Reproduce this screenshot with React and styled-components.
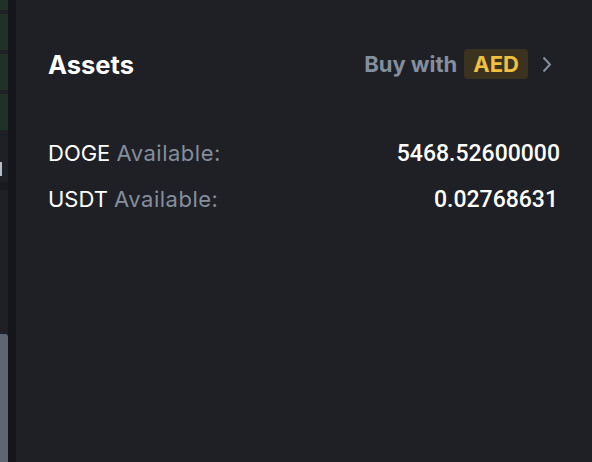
import React from "react";
import styled, { createGlobalStyle } from "styled-components";

const Global = createGlobalStyle`
  html, body { margin: 0; padding: 0; background: #15161b; }
  body { font-family: Inter, "Noto Sans", sans-serif; -webkit-font-smoothing: antialiased; }
`;

const Page = styled.div`
  display: flex;
  width: 592px;
  height: 462px;
  overflow: hidden;
  background: #15161b;
`;

const SideStrip = styled.div`
  width: 8px;
  display: flex;
  flex-direction: column;
  background: #1e2026;
`;

const GreenCell = styled.div`
  height: ${(p) => p.$h}px;
  margin-top: ${(p) => p.$mt}px;
  background: #1f3129;
`;

const Marker = styled.div`
  margin-top: 32px;
  width: 2px;
  height: 14px;
  background: #b7bdc6;
`;

const Divider = styled.div`
  margin-top: 6px;
  height: 8px;
  background: #181a1f;
`;

const ScrollThumb = styled.div`
  margin-top: auto;
  height: 128px;
  background: #5e6673;
  border-top-right-radius: 3px;
`;

const Gap = styled.div`
  width: 8px;
  background: #15161b;
`;

const Panel = styled.section`
  flex: 1;
  background: #1e2026;
  padding: 32px 32px 0 32px;
  display: flex;
  flex-direction: column;
`;

const Header = styled.div`
  display: flex;
  align-items: center;
  justify-content: space-between;
  height: 64px;
`;

const Title = styled.h2`
  margin: 0;
  font-size: 25.5px;
  font-weight: 700;
  color: #ffffff;
`;

const BuyLink = styled.div`
  display: flex;
  align-items: center;
  font-size: 22px;
  font-weight: 700;
  color: #848e9c;
`;

const Badge = styled.span`
  margin-left: 7px;
  height: 30px;
  padding: 0 9px;
  display: inline-flex;
  align-items: center;
  border-radius: 4px;
  background: #3c3220;
  color: #f0c040;
`;

const Chevron = styled.svg`
  margin-left: 14px;
  margin-right: 8px;
`;

const List = styled.div`
  margin-top: 34px;
  display: flex;
  flex-direction: column;
`;

const Row = styled.div`
  display: flex;
  justify-content: space-between;
  align-items: center;
  height: 46px;
  font-size: 22px;
`;

const Coin = styled.span`
  color: #ffffff;
`;

const Muted = styled.span`
  color: #848e9c;
  letter-spacing: 0.5px;
`;

const Amount = styled.span`
  color: #ffffff;
  font-family: Roboto, "Noto Sans", sans-serif;
  font-weight: 500;
  font-size: 23px;
  margin-right: ${(p) => p.$mr || 0}px;
`;

const assets = [
  { coin: "DOGE", amount: "5468.52600000", mr: 0 },
  { coin: "USDT", amount: "0.02768631", mr: 2 },
];

export default function App() {
  return (
    <>
      <Global />
      <Page>
        <SideStrip>
          <GreenCell $h={10} $mt={0} />
          <GreenCell $h={36} $mt={4} />
          <GreenCell $h={36} $mt={4} />
          <GreenCell $h={36} $mt={4} />
          <Marker />
          <Divider />
          <ScrollThumb />
        </SideStrip>
        <Gap />
        <Panel>
          <Header>
            <Title>Assets</Title>
            <BuyLink>
              Buy with
              <Badge>AED</Badge>
              <Chevron width="10" height="17" viewBox="0 0 10 17" fill="none">
                <path d="M1.5 1.5 L8 8.5 L1.5 15.5" stroke="#848e9c" strokeWidth="2" />
              </Chevron>
            </BuyLink>
          </Header>
          <List>
            {assets.map((a) => (
              <Row key={a.coin}>
                <span>
                  <Coin>{a.coin}</Coin> <Muted>Available:</Muted>
                </span>
                <Amount $mr={a.mr}>{a.amount}</Amount>
              </Row>
            ))}
          </List>
        </Panel>
      </Page>
    </>
  );
}
